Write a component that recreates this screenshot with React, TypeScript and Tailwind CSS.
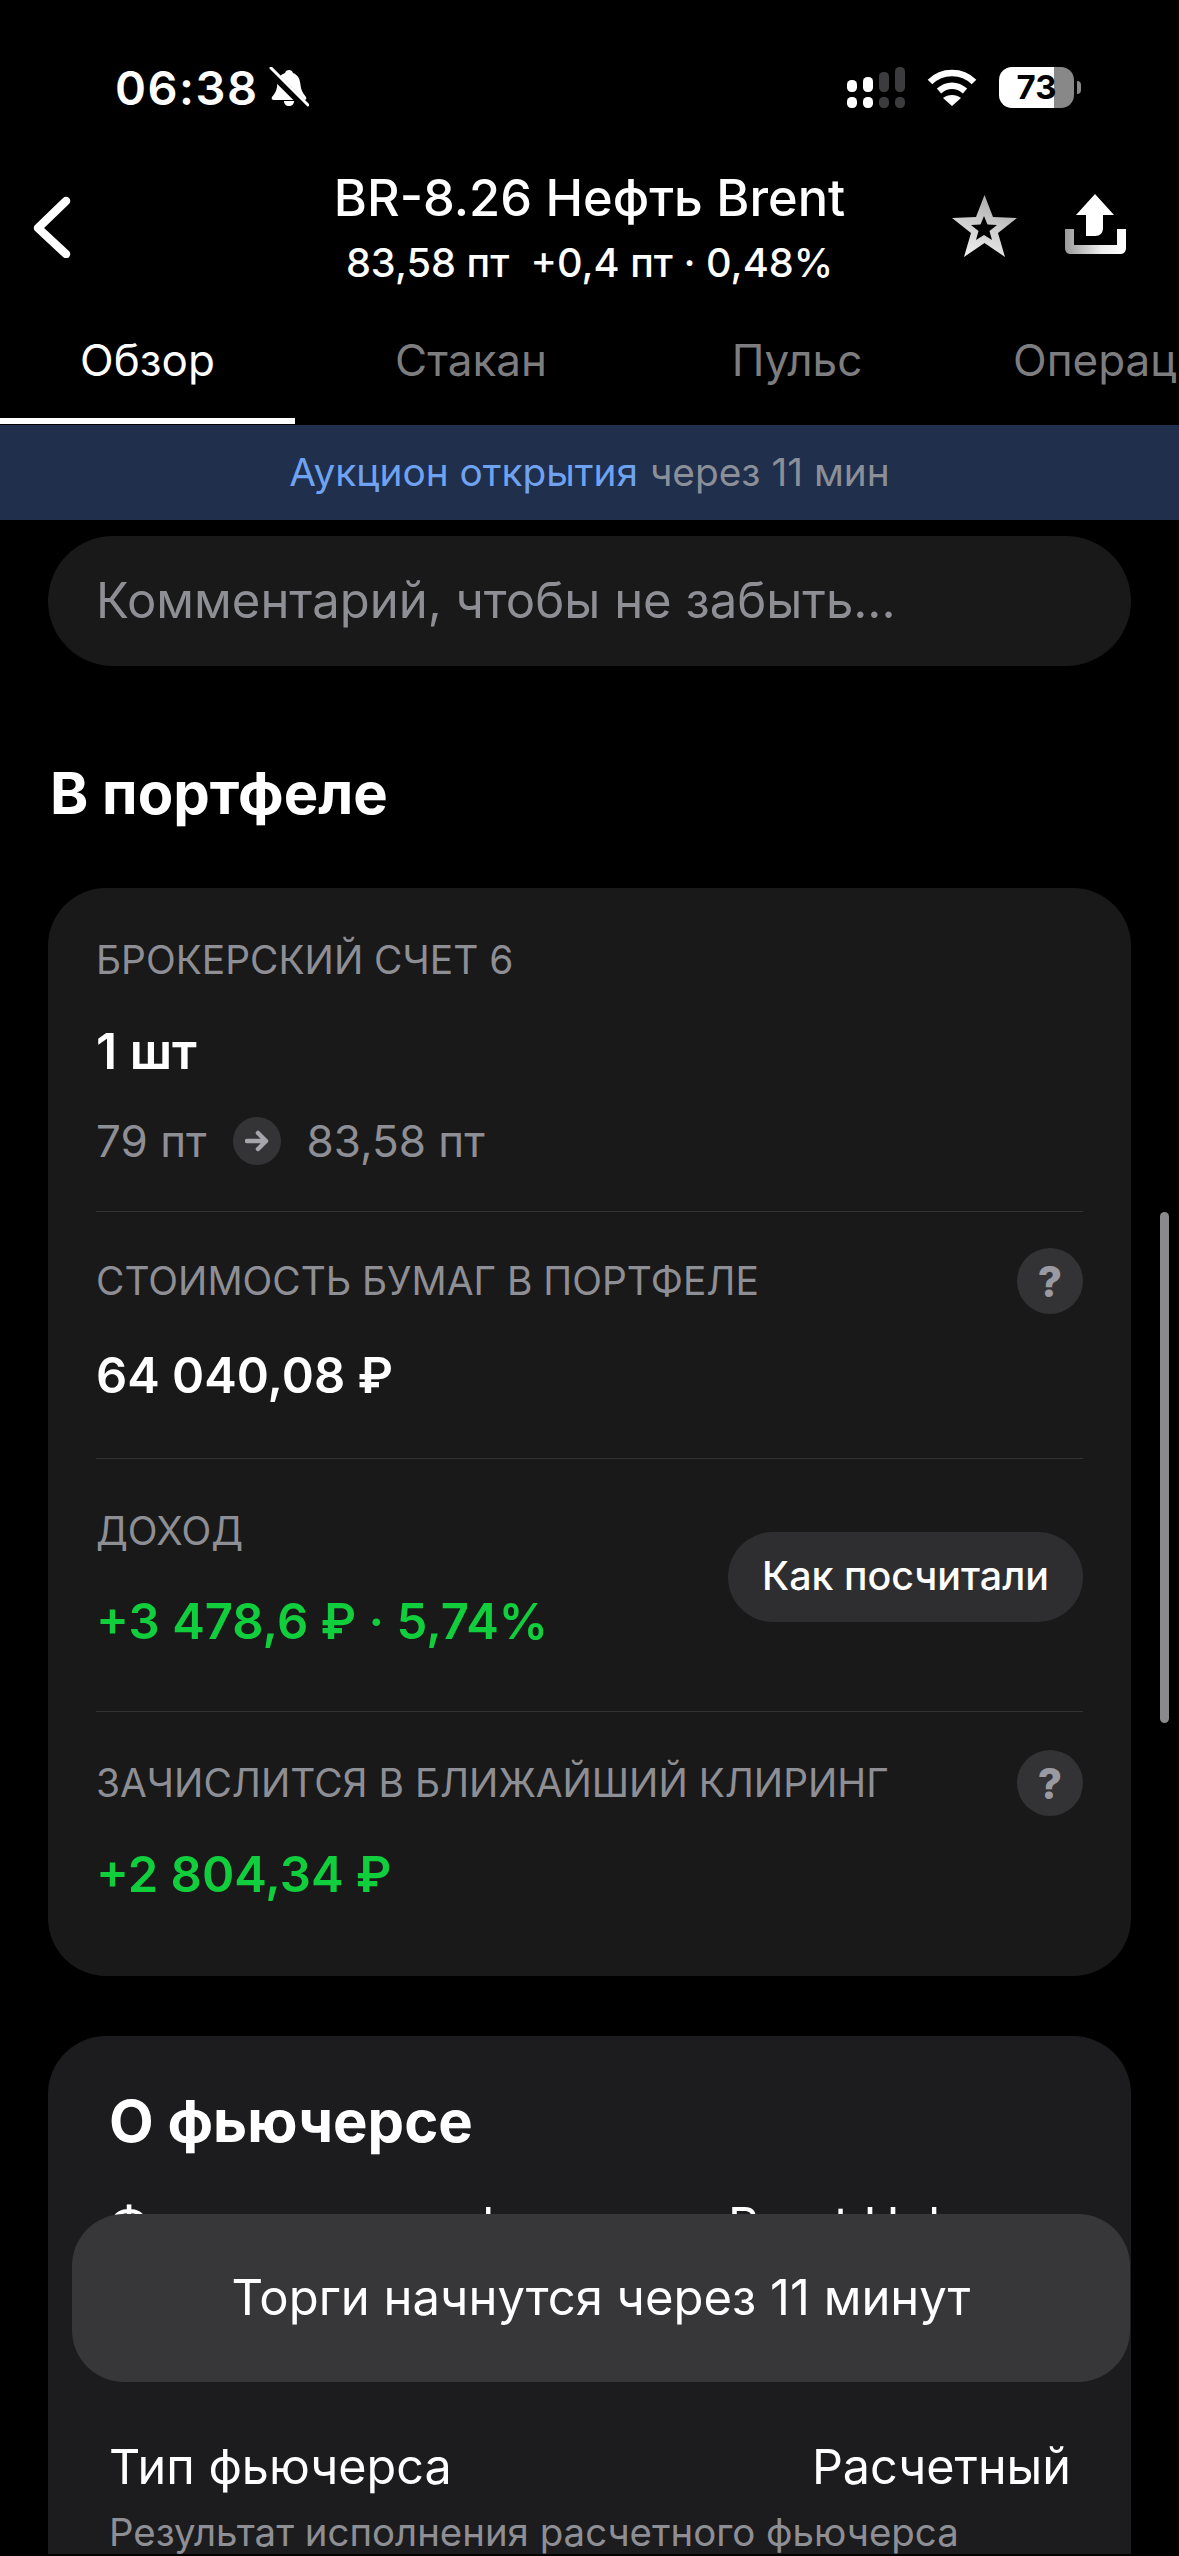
const FONT = "font-['Inter','Noto_Sans',sans-serif]";

function BellOff() {
  return (
    <svg width="40" height="40" viewBox="0 0 40 40" className="ml-[10px]">
      <path
        d="M20 3c2 0 3.500 1 4 3 5 2 7 6 7.500 12 .3 4 2 8 5.500 12 1 2 0 3-2 3H5c-2 0-3-1-2-3 3-3.500 4.500-6.500 5-10 .5-7 2-12 8-14 .5-2 2-3 4-3z"
        fill="#fff"
      />
      <path d="M15 34h10c0 3-2 5-5 5s-5-2-5-5z" fill="#fff" />
      <path d="M1 4l36 36" stroke="#000" strokeWidth="8" />
      <path d="M2 1l37 37" stroke="#fff" strokeWidth="3" strokeLinecap="round" />
    </svg>
  );
}

function Signal() {
  return (
    <svg width="58" height="41" viewBox="0 0 58 41">
      <rect x="0" y="13" width="10" height="12" rx="4.500" fill="#fff" />
      <rect x="16" y="10" width="10" height="15" rx="4.500" fill="#fff" />
      <rect x="32" y="5" width="10" height="20" rx="4.500" fill="#3c3c3e" />
      <rect x="48" y="0" width="10" height="25" rx="4.500" fill="#3c3c3e" />
      <rect x="0" y="30" width="10" height="11" rx="4.500" fill="#fff" />
      <rect x="16" y="30" width="10" height="11" rx="4.500" fill="#fff" />
      <rect x="32" y="30" width="10" height="11" rx="4.500" fill="#3c3c3e" />
      <rect x="48" y="30" width="10" height="11" rx="4.500" fill="#3c3c3e" />
    </svg>
  );
}

function Wifi() {
  return (
    <svg width="50" height="37" viewBox="0 0 50 37" fill="none">
      <path d="M3 13C15 1 35 1 47 13" stroke="#fff" strokeWidth="6.500" />
      <path d="M12 22c8-7 18-7 26 0" stroke="#fff" strokeWidth="6.500" />
      <path d="M25 37l-9-8c5-4 13-4 18 0z" fill="#fff" />
    </svg>
  );
}

function Battery() {
  return (
    <div className="flex items-center gap-[3px]">
      <div className="flex h-[41px] w-[75px] items-center justify-center rounded-[13px] bg-[linear-gradient(90deg,#fff_73%,#888_73%)] text-[33px] font-bold leading-none text-black">
        73
      </div>
      <div className="h-[13px] w-[4px] rounded-r-full bg-[#888]" />
    </div>
  );
}

function StatusBar() {
  return (
    <div className="flex h-[174px] items-center justify-between pl-[115px] pr-[98px]">
      <div className="flex items-center">
        <span className="text-[47px] font-semibold leading-none tracking-[1.5px] text-white">06:38</span>
        <BellOff />
      </div>
      <div className="flex items-center gap-[22px]">
        <Signal />
        <Wifi />
        <Battery />
      </div>
    </div>
  );
}

function Header() {
  return (
    <div className="grid h-[132px] grid-cols-[227px_1fr_227px]">
      <div className="pl-[32px] pt-[22px]">
        <svg width="42" height="62" viewBox="0 0 42 62" fill="none">
          <path d="M34 5L6 32l28 26" stroke="#fff" strokeWidth="8.500" strokeLinecap="round" strokeLinejoin="round" />
        </svg>
      </div>
      <div className="text-center text-white">
        <div className="text-[50.500px] font-medium leading-[48px]">BR-8.26 Нефть Brent</div>
        <div className="mt-[19px] whitespace-pre text-[39.700px] font-medium leading-[44px]">83,58 пт  +0,4 пт · 0,48%</div>
      </div>
      <div className="flex items-start gap-[47px] pt-[19px]">
        <svg width="65" height="62" viewBox="0 0 65 62" className="mt-[2px]">
          <defs>
            <linearGradient id="starFill" x1="0.7" y1="0" x2="0.3" y2="1">
              <stop offset="0" stopColor="#aaa" />
              <stop offset="1" stopColor="#f0f0f0" />
            </linearGradient>
          </defs>
          <path
            fillRule="evenodd"
            fill="url(#starFill)"
            d="M32.500 0L41 22l24 1-19 15 7 24-20.500-14L12 62l7-24L0 23l24-1zM32 21l-3.500 8.500L19 30l7.500 6L24 45l8-5 8 5-2.500-9L45 30l-9.500-.5z"
          />
        </svg>
        <svg width="62" height="61" viewBox="0 0 62 61">
          <defs>
            <linearGradient id="trayFill" x1="0" y1="0" x2="1" y2="0">
              <stop offset="0" stopColor="#999" />
              <stop offset="0.6" stopColor="#eee" />
              <stop offset="1" stopColor="#fff" />
            </linearGradient>
          </defs>
          <path d="M31 1l19 21H39v13c0 5-3 8-8 8h-9V22H12z" fill="#fff" />
          <path d="M1 36h9v16h43V36h9v19c0 3-2 6-5 6H6c-3 0-5-3-5-6z" fill="url(#trayFill)" />
        </svg>
      </div>
    </div>
  );
}

function Tabs() {
  return (
    <div className="flex h-[119px] overflow-hidden text-[44px] leading-[108px]">
      <div className="h-[118px] w-[295px] shrink-0 border-b-[6px] border-white text-center text-white">Обзор</div>
      <div className="w-[352px] shrink-0 text-center text-[#7d7d7f]">Стакан</div>
      <div className="w-[300px] shrink-0 text-center text-[#7d7d7f]">Пульс</div>
      <div className="shrink-0 pl-[66px] text-[#7d7d7f]">Операции</div>
    </div>
  );
}

function Banner() {
  return (
    <div className="flex h-[95px] items-center justify-center bg-[#1f2f4c] text-[38.800px]">
      <span className="text-[#6fa3f2]">Аукцион открытия</span>
      <span className="ml-[12px] text-[#8b8f98]">через 11 мин</span>
    </div>
  );
}

function Help() {
  return (
    <div className="flex h-[66px] w-[66px] items-center justify-center rounded-full bg-[#333335] text-[42px] font-extrabold text-[#9a9aa2]">
      ?
    </div>
  );
}

function Label({ children }: { children: string }) {
  return <div className="text-[38.900px] leading-[44px] text-[#8e8e95]">{children}</div>;
}

function PortfolioCard() {
  return (
    <div className="mt-[61px] rounded-[58px] bg-[#19191a] px-[48px]">
      <div className="border-b border-[#333335] pb-[45px] pt-[50px]">
        <Label>БРОКЕРСКИЙ СЧЕТ 6</Label>
        <div className="mt-[41px] text-[50px] font-semibold leading-[56px] text-white">1 шт</div>
        <div className="mt-[37px] flex h-[50px] items-center text-[44px] text-[#8e8e95]">
          <span>79 пт</span>
          <span className="mx-[26px] flex h-[48px] w-[48px] items-center justify-center rounded-full bg-[#343436]">
            <svg width="24" height="22" viewBox="0 0 24 22" fill="none">
              <path d="M2 11h19M13 3l8 8-8 8" stroke="#a5a5ab" strokeWidth="4.500" strokeLinecap="round" strokeLinejoin="round" />
            </svg>
          </span>
          <span>83,58 пт</span>
        </div>
      </div>

      <div className="border-b border-[#333335] pb-[52px] pt-[36px]">
        <div className="flex h-[66px] items-center justify-between">
          <Label>СТОИМОСТЬ БУМАГ В ПОРТФЕЛЕ</Label>
          <Help />
        </div>
        <div className="mt-[32px] text-[48.800px] font-semibold leading-[60px] text-white">64 040,08 ₽</div>
      </div>

      <div className="flex items-center justify-between border-b border-[#333335] pb-[59px] pt-[50px]">
        <div>
          <Label>ДОХОД</Label>
          <div className="mt-[39px] text-[49px] font-semibold leading-[60px] text-[#10ce3c]">+3 478,6 ₽ · 5,74%</div>
        </div>
        <div className="mb-[8px] flex h-[90px] w-[355px] items-center justify-center rounded-full bg-[#2e2e30] text-[39.400px] font-medium text-white">
          Как посчитали
        </div>
      </div>

      <div className="pb-[71px] pt-[38px]">
        <div className="flex h-[66px] items-center justify-between">
          <Label>ЗАЧИСЛИТСЯ В БЛИЖАЙШИЙ КЛИРИНГ</Label>
          <Help />
        </div>
        <div className="mt-[29px] text-[49px] font-semibold leading-[60px] text-[#10ce3c]">+2 804,34 ₽</div>
      </div>
    </div>
  );
}

function FuturesCard() {
  return (
    <div className="mt-[60px] rounded-t-[58px] bg-[#1c1c1e] pl-[61px] pr-[60px] pt-[51px] text-white">
      <div className="text-[58px] font-bold leading-[68px]">О фьючерсе</div>
      <div className="mt-[42px] flex justify-between text-[48.500px] leading-[56px]">
        <span>Фьючерс на нефть</span>
        <span className="pr-[113px]">Brent Hub</span>
      </div>
      <div className="mt-[186px] flex justify-between text-[48.500px] leading-[56px]">
        <span>Тип фьючерса</span>
        <span>Расчетный</span>
      </div>
      <div className="mt-[15px] text-[38.400px] leading-[44px] text-[#8e8e95]">Результат исполнения расчетного фьючерса</div>
    </div>
  );
}

export default function App() {
  return (
    <div className={`relative flex h-[2556px] w-[1179px] flex-col overflow-hidden bg-black ${FONT}`}>
      <StatusBar />
      <Header />
      <Tabs />
      <Banner />
      <div className="min-h-0 flex-1 overflow-hidden px-[48px] pt-[16px]">
        <div className="flex h-[130px] items-center rounded-[65px] bg-[#19191a] px-[48px] text-[49px] text-[#8e8e95]">
          Комментарий, чтобы не забыть...
        </div>
        <h2 className="mt-[93px] pl-[2px] text-[58px] font-bold leading-[68px] text-white">В портфеле</h2>
        <PortfolioCard />
        <FuturesCard />
      </div>

      {/* scroll indicator + toast sit over the content */}
      <div className="absolute left-[1160px] top-[1212px] h-[511px] w-[9px] rounded-full bg-[#8a8a8c]" />
      <div className="absolute left-[72px] top-[2214px] flex h-[168px] w-[1058px] items-center justify-center rounded-[52px] bg-[#373739] text-[49px] text-white">
        Торги начнутся через 11 минут
      </div>
    </div>
  );
}
